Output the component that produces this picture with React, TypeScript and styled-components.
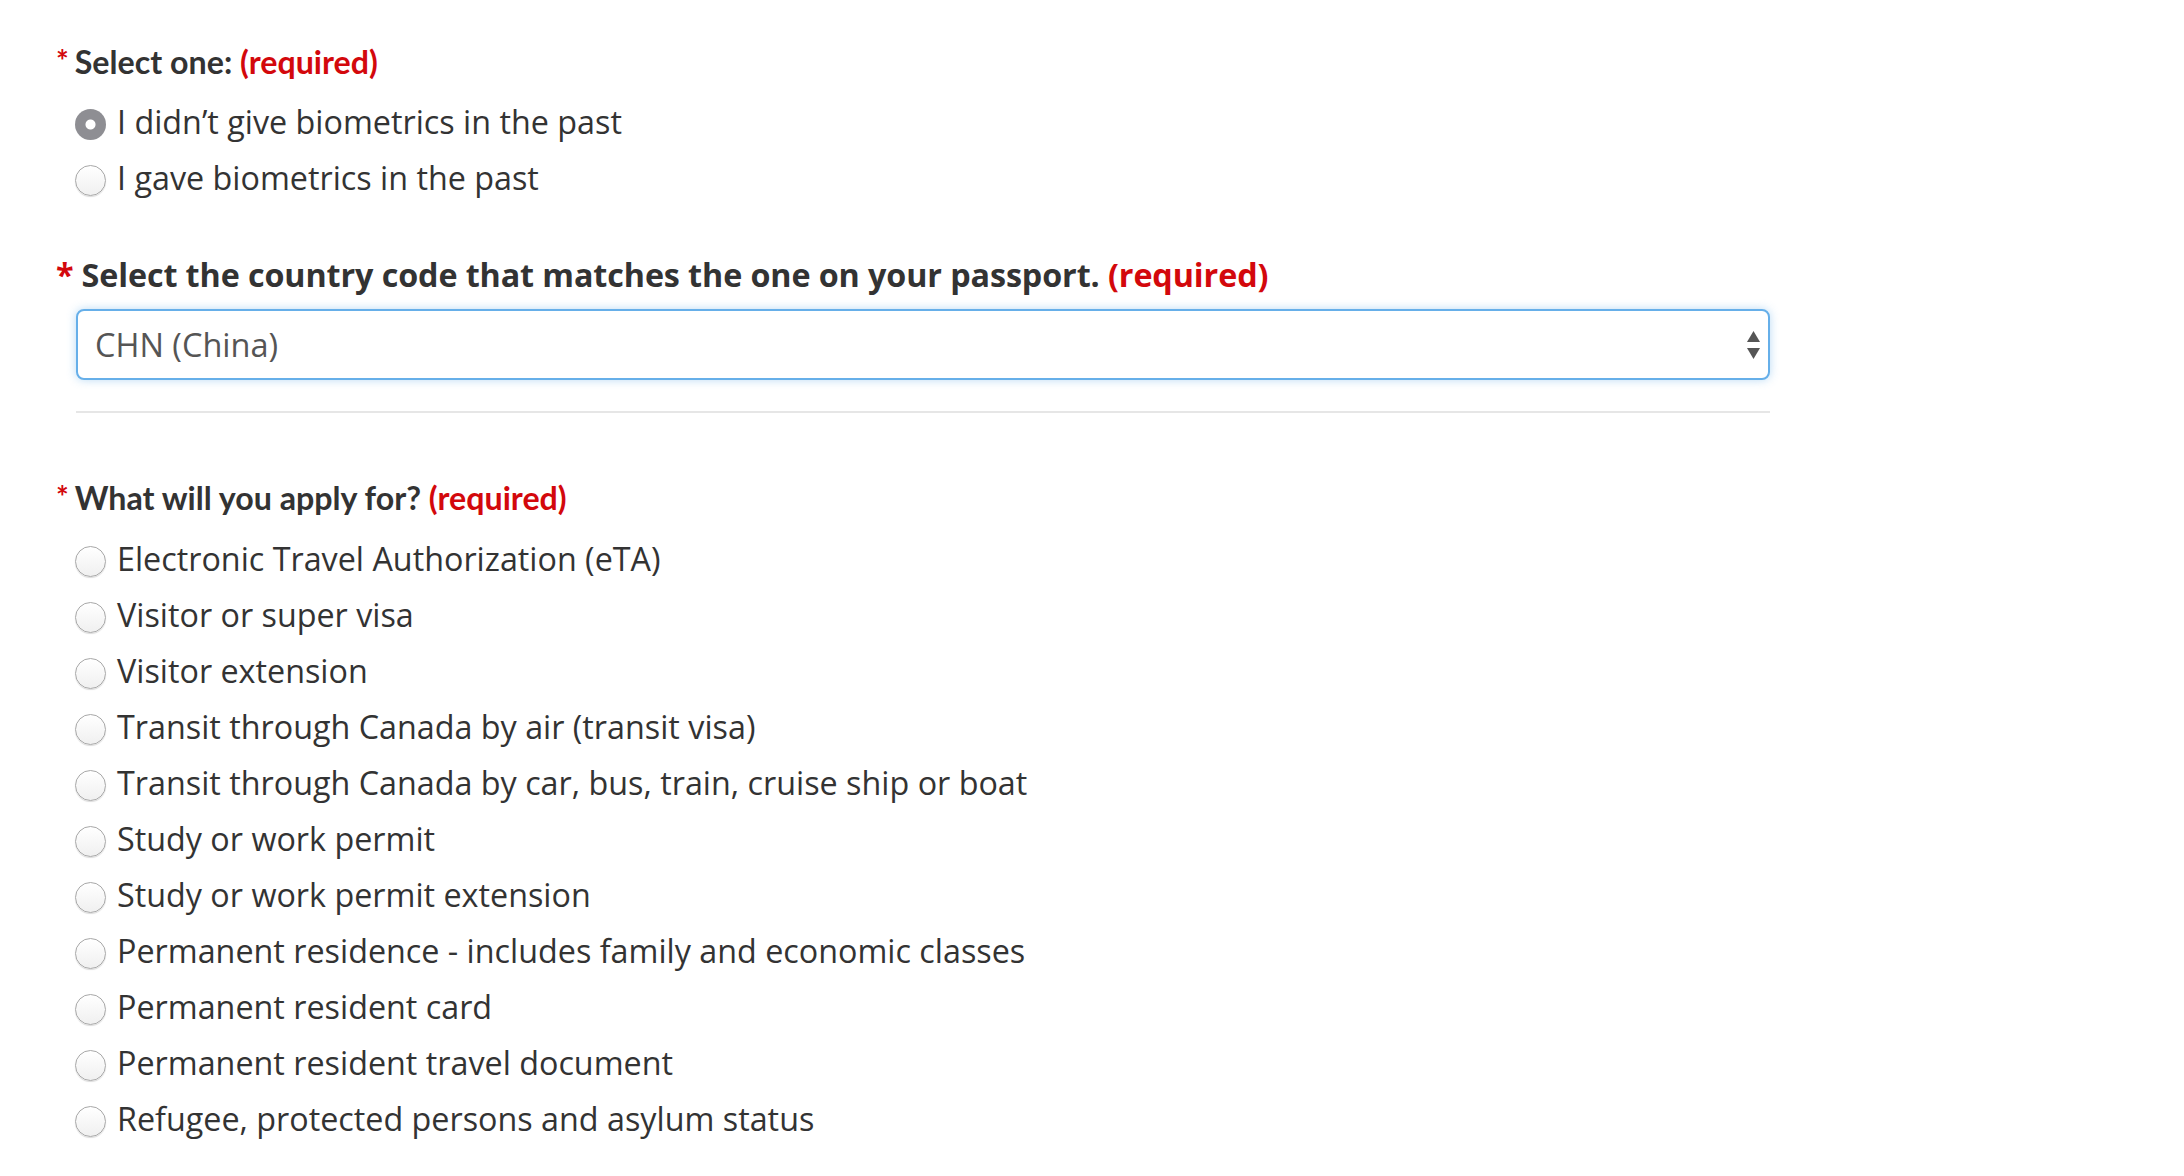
import React, { useState } from "react"
import styled, { createGlobalStyle } from "styled-components"

const GlobalStyle = createGlobalStyle`
	html, body {
		margin: 0;
		padding: 0;
		background: #ffffff;
	}
	body {
		font-family: "Open Sans", "Noto Sans", sans-serif;
		color: #333333;
	}
`

const Page = styled.div`
	padding: 38px 0 40px 56px;
	width: 1714px;
`

const Label = styled.div<{ $top?: number }>`
	font-family: Lato, "Open Sans", sans-serif;
	font-weight: 700;
	font-size: 32.2px;
	line-height: 44px;
	height: 44px;
	margin-top: ${(p) => p.$top || 0}px;
	color: #333333;
	white-space: nowrap;
`

const WideLabel = styled(Label)`
	font-family: "Open Sans", "Noto Sans", sans-serif;
	font-size: 32.3px;
	letter-spacing: -0.1px;
`

const Star = styled.span`
	color: #d3080c;
	font-size: 30px;
	vertical-align: 2px;
	margin-right: 6px;
`

const BigStar = styled.span`
	color: #d3080c;
	margin-right: 8px;
`

const Required = styled.span`
	color: #d3080c;
`

const RadioList = styled.div<{ $top?: number }>`
	display: flex;
	flex-direction: column;
	margin-top: ${(p) => p.$top ?? 11}px;
	padding-left: 18px;
`

const RadioRow = styled.label`
	display: flex;
	align-items: center;
	height: 56px;
	gap: 12px;
	font-size: 32.3px;
	color: #333333;
	cursor: pointer;
	white-space: nowrap;
`

const Radio = styled.input`
	appearance: none;
	-webkit-appearance: none;
	margin: 0;
	width: 31px;
	height: 31px;
	border-radius: 50%;
	border: 1.5px solid #a8a8a8;
	background: linear-gradient(#ffffff, #f0f0f0);
	box-shadow: 0 1px 1px rgba(0, 0, 0, 0.15);
	box-sizing: border-box;
	flex-shrink: 0;
	position: relative;
	top: 3px;
	left: 1px;

	&:checked {
		border: none;
		background: radial-gradient(circle, #ffffff 0 4.5px, #8e8e93 5.5px);
		box-shadow: none;
	}
`

const SelectWrap = styled.div`
	position: relative;
	margin: 13px 0 0 20px;
	width: 1694px;
`

const CountrySelect = styled.select`
	appearance: none;
	-webkit-appearance: none;
	width: 100%;
	height: 71px;
	box-sizing: border-box;
	border: 2px solid #66afe9;
	border-radius: 8px;
	box-shadow: 0 0 10px rgba(102, 175, 233, 0.45);
	background: #ffffff;
	padding: 0 60px 0 17px;
	font-family: "Open Sans", "Noto Sans", sans-serif;
	font-size: 32.5px;
	color: #555555;
	outline: none;
`

const Arrows = styled.svg`
	position: absolute;
	right: 10px;
	top: 50%;
	transform: translateY(-50%);
	pointer-events: none;
`

const Rule = styled.hr`
	margin: 31px 0 0 20px;
	width: 1694px;
	border: none;
	border-top: 2px solid #e6e6e6;
	height: 0;
`

const biometricOptions = [
	"I didn\u2019t give biometrics in the past",
	"I gave biometrics in the past",
]

const applyOptions = [
	"Electronic Travel Authorization (eTA)",
	"Visitor or super visa",
	"Visitor extension",
	"Transit through Canada by air (transit visa)",
	"Transit through Canada by car, bus, train, cruise ship or boat",
	"Study or work permit",
	"Study or work permit extension",
	"Permanent residence - includes family and economic classes",
	"Permanent resident card",
	"Permanent resident travel document",
	"Refugee, protected persons and asylum status",
]

function App() {
	const [biometrics, setBiometrics] = useState(0)
	const [apply, setApply] = useState(-1)

	return (
		<Page>
			<GlobalStyle />
			<Label>
				<Star>*</Star>Select one: <Required>(required)</Required>
			</Label>
			<RadioList>
				{biometricOptions.map((text, i) => (
					<RadioRow key={text}>
						<Radio
							type="radio"
							name="biometrics"
							checked={biometrics === i}
							onChange={() => setBiometrics(i)}
						/>
						{text}
					</RadioRow>
				))}
			</RadioList>

			<WideLabel $top={47}>
				<BigStar>*</BigStar>Select the country code that matches the one on your passport.{" "}
				<Required>(required)</Required>
			</WideLabel>
			<SelectWrap>
				<CountrySelect defaultValue="CHN">
					<option value="CHN">CHN (China)</option>
					<option value="CAN">CAN (Canada)</option>
					<option value="USA">USA (United States)</option>
				</CountrySelect>
				<Arrows width="13" height="28" viewBox="0 0 13 28">
					<path d="M6.5 0 L13 11 L0 11 Z" fill="#555555" />
					<path d="M0 17 L13 17 L6.5 28 Z" fill="#555555" />
				</Arrows>
			</SelectWrap>
			<Rule />

			<Label $top={61}>
				<Star>*</Star>What will you apply for? <Required>(required)</Required>
			</Label>
			<RadioList $top={12}>
				{applyOptions.map((text, i) => (
					<RadioRow key={text}>
						<Radio
							type="radio"
							name="apply"
							checked={apply === i}
							onChange={() => setApply(i)}
						/>
						{text}
					</RadioRow>
				))}
			</RadioList>
		</Page>
	)
}

export default App
